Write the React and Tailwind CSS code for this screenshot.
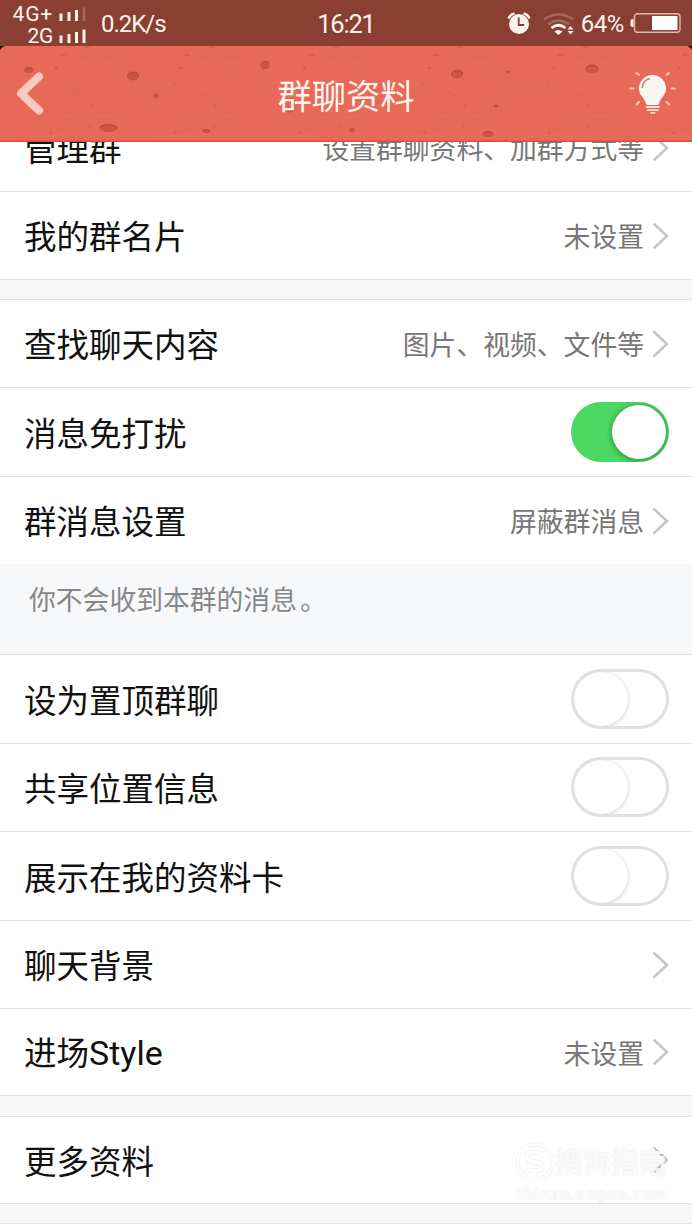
import clsx from 'clsx';

const HOLES = [
  { x: 29, y: 24, rx: 5, ry: 3 },
  { x: 133, y: 30, rx: 6.5, ry: 4.5 },
  { x: 156, y: 50, rx: 3, ry: 2.5 },
  { x: 108.5, y: 82, rx: 9.5, ry: 4 },
  { x: 206, y: 85, rx: 4.5, ry: 2 },
  { x: 265, y: 19, rx: 5, ry: 4.2 },
  { x: 290, y: 64, rx: 4, ry: 2.5 },
  { x: 352, y: 84, rx: 3, ry: 2.5 },
  { x: 457, y: 28, rx: 6.5, ry: 4.2 },
  { x: 508, y: 26, rx: 2.5, ry: 1.8 },
  { x: 592, y: 23, rx: 7, ry: 4.5 },
  { x: 496, y: 60, rx: 3, ry: 1.8 },
  { x: 488, y: 88, rx: 6, ry: 3 },
];

const HeaderTexture = () => (
  <svg className="absolute inset-0" width="692" height="96" viewBox="0 0 692 96">
    <defs>
      <pattern id="specks" width="124.5" height="96" patternUnits="userSpaceOnUse">
        <g fill="#d4523f">
          <circle cx="56" cy="22" r="1.8" opacity="0.6" />
          <circle cx="54" cy="26" r="0.9" opacity="0.6" />
          <circle cx="49" cy="38" r="1.5" opacity="0.4" />
          <circle cx="91" cy="60" r="1.4" opacity="0.5" />
          <circle cx="90" cy="80" r="1.3" opacity="0.5" />
          <circle cx="51" cy="87" r="1.4" opacity="0.6" />
          <ellipse cx="87" cy="1" rx="3" ry="1.3" opacity="0.5" />
          <ellipse cx="62" cy="9" rx="3" ry="1.6" opacity="0.6" />
        </g>
        <path
          d="M62 8l5 2M72 46l5 1 6 3 3 3M40 24l6-1"
          fill="none"
          stroke="#d4523f"
          strokeWidth="1"
          opacity="0.35"
        />
        <path
          d="M10 38q20-4 40 0M65 70q20 3 48-1M30 92q15-4 42-2M78 17q17-4 36 1"
          fill="none"
          stroke="#ee7a65"
          strokeWidth="2"
          opacity="0.2"
        />
      </pattern>
    </defs>
    <rect width="692" height="96" fill="url(#specks)" />
    {HOLES.map((hole, index) => (
      <g key={index}>
        <ellipse cx={hole.x} cy={hole.y + 0.6} rx={hole.rx} ry={hole.ry} fill="#ee7763" />
        <ellipse cx={hole.x} cy={hole.y} rx={hole.rx - 0.3} ry={hole.ry} fill="#c14c3b" />
        <ellipse cx={hole.x} cy={hole.y + 0.7} rx={hole.rx - 1} ry={hole.ry - 0.9} fill="#cc5443" />
      </g>
    ))}
    <rect y="94.5" width="692" height="1.5" fill="#cf5243" />
    <path d="M0 0h5Q1 1 0 4.5zM692 0h-5q4 1 5 4.500z" fill="#2b0b0c" />
  </svg>
);

const SignalBars = ({ bars }) => (
  <svg className="ml-1.5" width="28" height="14" viewBox="0 0 28 14" fill="#fff3ee">
    <rect x="0.5" y="6.5" width="3" height="7.5" />
    <rect x="8.5" y="5" width="3" height="9" />
    <rect x="16" y="3" width="3" height="11" />
    <rect x="23.5" y="0.5" width="3" height="13.500" opacity={bars === 4 ? 1 : 0.22} />
  </svg>
);

const AlarmIcon = () => (
  <svg width="24" height="24" viewBox="0 0 24 24">
    <circle cx="12" cy="13" r="10" fill="#fff3ee" />
    <path d="M1.500 7.500q1.500-4 6-5M22.500 7.500q-1.500-4-6-5" fill="none" stroke="#fff3ee" strokeWidth="2.400" />
    <path d="M11.700 6.500V14h5.500" fill="none" stroke="#893f31" strokeWidth="1.800" />
  </svg>
);

const WifiIcon = () => (
  <svg width="32" height="24" viewBox="0 0 32 24">
    <g fill="none" stroke="#fff3ee">
      <path d="M1 7.500q14-10 29.500 0" strokeWidth="2.400" opacity="0.22" />
      <path d="M5 12.500q10.500-8 21 0" strokeWidth="2.400" opacity="0.22" />
      <path d="M8.500 16q7-5.500 14 0" strokeWidth="2.800" />
    </g>
    <path d="M11.500 19.500q4-3 8 0l-4 3.500zM27.500 14l3 3.500h-6zM27.500 22.500l3-3.500h-6z" fill="#fff3ee" />
  </svg>
);

const BatteryIcon = () => (
  <svg width="51" height="20" viewBox="0 0 51 20">
    <rect x="4.500" y="0.700" width="45.500" height="18.500" rx="3" fill="none" stroke="#e3b8ab" strokeWidth="1.400" />
    <rect x="22" y="3" width="25.500" height="14" fill="#fff" />
    <path d="M3.500 6q-3 0-3 2v4q0 2 3 2z" fill="#fff3ee" />
  </svg>
);

const StatusBar = () => (
  <div className="relative flex h-[46px] items-center justify-between bg-[#893f31] px-[11px] font-['Roboto',sans-serif] text-2xl text-[#fff3ee]">
    <div className="flex items-center">
      <div className="flex w-[76px] flex-col pt-1 text-[21px]">
        <div className="flex h-[22px] items-center justify-end">
          <span className="leading-[22px] tracking-[0.8px]">4G+</span>
          <SignalBars bars={3} />
        </div>
        <div className="flex h-[22px] items-center justify-end">
          <span className="leading-[22px] -tracking-[0.3px]">2G</span>
          <SignalBars bars={4} />
        </div>
      </div>
      <span className="ml-[14px] pt-0.5 tracking-[-1px]">0.2K/s</span>
    </div>
    <span className="absolute inset-x-0 pt-[3px] text-center text-[25.5px] tracking-[-1.2px]">16:21</span>
    <div className="flex items-center">
      <AlarmIcon />
      <div className="ml-3 pt-0.5">
        <WifiIcon />
      </div>
      <span className="ml-[6px] pt-0.5 tracking-[-0.4px]">64%</span>
      <div className="ml-[6px]">
        <BatteryIcon />
      </div>
    </div>
  </div>
);

const Bulb = () => (
  <svg className="relative" width="48" height="48" viewBox="0 0 48 48">
    <path
      d="M24.500 5a13.600 13.600 0 0 0-13.600 13.600c0 7 6 9.500 7 15q.3 1.300 1.600 1.300h10q1.300 0 1.600-1.300c1-5.500 7-8 7-15A13.600 13.600 0 0 0 24.500 5z"
      fill="#f8f5f3"
    />
    <path d="M14.300 17.500q1-7 7-8.700" fill="none" stroke="#b98478" strokeWidth="1.600" strokeLinecap="round" />
    <path d="M18.500 37H31M19.500 40.200H30M23 42.900h3.500" stroke="#fbddd5" strokeWidth="1.800" strokeLinecap="round" />
    <path
      d="M8.500 3l2.500 2M41 3l-2.500 2M2.500 18.500h3M43.500 18.500h3M8.500 34.500L11 32M41 34.500L38.500 32"
      stroke="#ffc9ba"
      strokeWidth="2"
      strokeLinecap="round"
    />
  </svg>
);

const Header = () => (
  <header className="relative z-10 flex h-24 items-center justify-between bg-[#e86957] pl-4 pr-4">
    <HeaderTexture />
    <svg className="relative" width="30" height="46" viewBox="0 0 30 46">
      <path
        d="M23 5.500L5 22.500l18 17"
        fill="none"
        stroke="#fac8bf"
        strokeWidth="8"
        strokeLinecap="round"
        strokeLinejoin="round"
      />
    </svg>
    <h1 className="absolute inset-x-0 pb-px text-center text-[34.3px] leading-[48px] text-[#fff5ef]">
      群聊资料
    </h1>
    <Bulb />
  </header>
);

const Chevron = () => (
  <svg className="ml-2" width="17" height="28" viewBox="0 0 17 28">
    <path d="M1.500 1.500L15 14 1.500 26.500" fill="none" stroke="#c5c5c7" strokeWidth="2.500" />
  </svg>
);

const Toggle = ({ on }) => (
  <div
    className={clsx(
      'flex h-[60px] w-[98px] items-center overflow-hidden rounded-full -mt-px',
      on ? 'justify-end bg-[#4cd763] pr-[3px]' : 'border-[3px] border-[#e0e0e0] bg-white',
    )}
  >
    <div
      className={clsx(
        'size-[54px] rounded-full bg-white',
        on ? 'shadow-[0_1px_4px_2px_rgba(0,0,0,0.22)]' : 'shadow-[0_1px_4px_0px_rgba(0,0,0,0.22)]',
      )}
    />
  </div>
);

const Row = ({ label, value, toggle, on, className }) => (
  <div
    className={clsx(
      'flex items-center justify-between bg-white pl-6 pr-[23px] border-[#dfe1e3]',
      className,
    )}
  >
    <span className="pb-px text-[32.5px] leading-[48px] text-[#111]">{label}</span>
    {toggle ? (
      <Toggle on={on} />
    ) : (
      <div className="flex items-center">
        <span className="pt-px text-[26.8px] leading-10 text-[#777]">{value}</span>
        <Chevron />
      </div>
    )}
  </div>
);

const Watermark = () => (
  <div className="absolute left-[515px] top-[1141px] w-[156px] text-white/80 [text-shadow:0_0_2px_rgba(0,0,0,0.12)]">
    <div className="flex h-10 items-center">
      <svg width="40" height="40" viewBox="0 0 40 40" fill="none">
        <circle cx="20" cy="21" r="17.500" stroke="#f1f1f1" strokeWidth="4" />
        <circle cx="20" cy="21" r="17.500" stroke="#fff" strokeWidth="2.500" />
        <path d="M28 14q-4-3-9-3-7 0-7 5 0 4 8 5t7 5q0 4-7 4-5 0-9-3" stroke="#f1f1f1" strokeWidth="5" />
        <path d="M28 14q-4-3-9-3-7 0-7 5 0 4 8 5t7 5q0 4-7 4-5 0-9-3" stroke="#fff" strokeWidth="3.500" />
      </svg>
      <span className="text-[28px] leading-10 font-bold whitespace-nowrap">搜狗指南</span>
    </div>
    <div className="pt-0.5 text-[16px] leading-6 font-bold tracking-[0.8px] font-['Liberation_Sans',sans-serif] whitespace-nowrap">
      zhinan.sogou.com
    </div>
  </div>
);

const App = () => (
  <div className="relative flex h-[1230px] w-[692px] flex-col overflow-hidden bg-[#f7f8fa] font-['Noto_Sans_CJK_SC',sans-serif]">
    <StatusBar />
    <Header />
    <main className="-mt-[38px]">
      <Row className="h-[88px] border-b" label="管理群" value="设置群聊资料、加群方式等" />
      <Row className="h-[88px] border-b" label="我的群名片" value="未设置" />

      <div className="mt-[19px] border-t border-[#dfe1e3]">
        <Row className="h-[88px] border-b" label="查找聊天内容" value="图片、视频、文件等" />
        <Row className="h-[89px] border-b" label="消息免打扰" toggle on />
        <Row className="h-[87px]" label="群消息设置" value="屏蔽群消息" />
      </div>

      <p className="h-[90px] pl-[29px] pt-[15px] text-[26.8px] leading-10 text-[#868788]">
        你不会收到本群的消息<span className="ml-[3px]">。</span>
      </p>

      <div className="border-t border-[#dfe1e3]">
        <Row className="h-[89px] border-b" label="设为置顶群聊" toggle />
        <Row className="h-[88px] border-b" label="共享位置信息" toggle />
        <Row className="h-[89px] border-b" label="展示在我的资料卡" toggle />
        <Row className="h-[88px] border-b" label="聊天背景" />
        <Row
          className="h-[87px] border-b"
          label={
            <>
              进场<span className="font-['Roboto',sans-serif] text-[34px]">Style</span>
            </>
          }
          value="未设置"
        />
      </div>

      <div className="mt-[20px] border-t border-[#dfe1e3]">
        <Row className="h-[87px] border-b" label="更多资料" />
      </div>
      <div className="mt-[19px] h-[7px] border-t border-[#dfe1e3] bg-white" />
    </main>
    <Watermark />
  </div>
);

export default App;
